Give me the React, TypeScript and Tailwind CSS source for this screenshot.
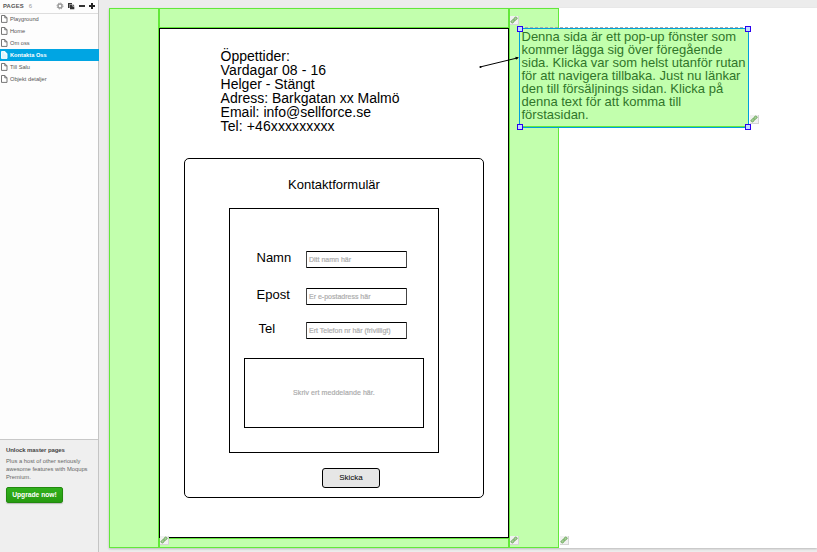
import type { ReactNode } from 'react';

const pages = ['Playground', 'Home', 'Om oss', 'Kontakta Oss', 'Till Salu', 'Objekt detaljer'];

const FileIcon = ({ active }: { active: boolean }) => (
  <svg className="h-[8px] w-[7px] shrink-0" viewBox="0 0 7 8" stroke={active ? '#fff' : '#666'} strokeWidth="0.9">
    <path d="M0.5 0.5H3.8L6 2.8V7.4H0.5Z" fill={active ? '#dff3fc' : '#fff'} />
    <path d="M3.8 0.5V2.8H6" fill="none" />
  </svg>
);

const Toolbar = () => (
  <div className="flex items-center">
    <svg className="h-[8px] w-[8px]" viewBox="0 0 8 8" fill="none" stroke="#999">
      <circle cx="4" cy="4" r="2" strokeWidth="1.4" />
      <circle cx="4" cy="4" r="3" strokeWidth="1" strokeDasharray="1.2 1.156" />
    </svg>
    <svg className="ml-[3px] h-[8px] w-[8px]" viewBox="0 0 8 8">
      <path d="M1 1H5V2H2.6V6H1Z" fill="#333" />
      <path d="M3 2.5H5.5V4.5H7.3V7.3H3Z" fill="#333" />
      <path d="M6 2.3L7.4 3.9H6Z" fill="#555" />
    </svg>
    <svg className="ml-[3px] h-[8px] w-[8px]" viewBox="0 0 8 8">
      <path d="M1 3H7V5H1Z" fill="#333" />
    </svg>
    <svg className="ml-[2px] h-[8px] w-[8px]" viewBox="0 0 8 8">
      <path d="M1 3H3V1H5V3H7V5H5V7H3V5H1Z" fill="#222" />
    </svg>
  </div>
);

const Sidebar = () => (
  <aside className="flex w-[99px] shrink-0 flex-col border-r border-[#c4c4c4] bg-[#efefef]">
    <div className="flex h-[440px] flex-col border-b border-[#c8c8c8] bg-[#fdfdfd]">
      <header className="flex h-[14px] shrink-0 items-center border-b border-[#ddd] pb-px pl-[3px] pr-[2px]">
        <span className="text-[5.9px] font-bold tracking-[0.1px] text-[#555]">PAGES</span>
        <span className="ml-[5px] flex-1 text-[6px] text-[#999]">6</span>
        <Toolbar />
      </header>
      <ul className="-mt-px">
        {pages.map((page) => {
          const active = page === 'Kontakta Oss';
          return (
            <li
              key={page}
              className={`flex h-[12px] items-center gap-[2px] pl-px text-[5.7px] leading-[12px] ${active ? '-mr-px bg-[#00a5e3] font-bold text-white' : 'text-[#555]'}`}
            >
              <FileIcon active={active} />
              {page}
            </li>
          );
        })}
      </ul>
    </div>
    <div className="flex flex-col items-start pl-[6px] pt-[6px]">
      <h2 className="text-[6px] font-bold leading-[8px] tracking-[-0.08px] text-[#444]">Unlock master pages</h2>
      <p className="mt-[3px] whitespace-nowrap text-[5.8px] leading-[8px] text-[#666]">
        Plus a host of other seriously
        <br />
        awesome features with Moqups
        <br />
        Premium.
      </p>
      <button className="mt-[6px] h-[16px] w-[57px] whitespace-nowrap rounded-[2px] border border-[#22890f] bg-linear-to-b from-[#30b01c] to-[#279b10] text-[6.7px] font-bold leading-[14px] text-white shadow-[0_1px_1px_#bbb]">
        Upgrade now!
      </button>
    </div>
  </aside>
);

const LinkBadge = ({ place }: { place: string }) => (
  <span className={`absolute flex h-[9px] w-[9px] items-center justify-center border-b border-r border-[#d5d5d5] bg-[#f1f1f1] ${place}`}>
    <svg className="h-[8px] w-[8px]" viewBox="0 0 8 8" fill="#a9d09b" stroke="#6aa85a" strokeWidth="0.9">
      <rect x="-1.8" y="-1.2" width="3.6" height="2.4" rx="1" transform="translate(5.4 2.7) rotate(-42)" />
      <rect x="-1.8" y="-1.2" width="3.6" height="2.4" rx="1" transform="translate(2.7 5.3) rotate(-42)" />
    </svg>
  </span>
);

const Hotspot = ({ place }: { place: string }) => (
  <div className={`absolute border border-[#63e83b] bg-[#c2ffad] ${place}`} />
);

const Handle = ({ place }: { place: string }) => (
  <span className={`absolute h-[6px] w-[6px] border border-[#2a00f0] bg-[#c0dcff] ${place}`} />
);

const Field = ({ label, hint, className }: { label: ReactNode; hint: string; className: string }) => (
  <div className={`flex h-[17px] items-start ${className}`}>
    <div className="w-[50px] pl-[0.5px] text-[13px] leading-[13px]">{label}</div>
    <div className="flex h-[17px] w-[101px] items-center whitespace-nowrap rounded-[1px] border border-x-[#444] border-y-black pl-[2px] text-[7px] leading-[8px] text-[#aaa] [-webkit-text-stroke:0.2px_#b0b0b0]">
      {hint}
    </div>
  </div>
);

const ContactForm = () => (
  <section className="absolute left-[184px] top-[158px] flex h-[340px] w-[300px] flex-col items-center rounded-[5px] border border-black">
    <h1 className="mt-[19px] text-[13px] leading-[14px]">Kontaktformulär</h1>
    <div className="mt-[16px] flex h-[245px] w-[210px] shrink-0 flex-col border border-black pt-[42px]">
      <Field className="ml-[26px]" label="Namn" hint="Ditt namn här" />
      <Field className="ml-[26px] mt-[20px]" label="Epost" hint="Er e-postadress här" />
      <Field className="ml-[26px] mt-[17px]" label={<span className="pl-[2px]">Tel</span>} hint="Ert Telefon nr här (frivilligt)" />
      <div className="ml-[14px] mt-[19px] flex h-[70px] w-[180px] items-center justify-center border border-black pt-px text-[7px] tracking-[0.08px] text-[#aaa] [-webkit-text-stroke:0.2px_#b0b0b0]">
        Skriv ert meddelande här.
      </div>
    </div>
    <button className="ml-[34px] mt-[15px] h-[20px] w-[58px] rounded-[3px] border border-black bg-[#e6e6e6] text-[8px] leading-[18px] text-black">
      Skicka
    </button>
  </section>
);

const PopupNote = () => (
  <div className="absolute left-[519px] top-[28px] h-[100px] w-[230px] border border-[#009fdc] bg-[#c2ffad]">
    <p className="ml-[1.5px] mt-px whitespace-nowrap text-[13px] leading-[13px] text-[#30752a]">
      Denna sida är ett pop-up fönster som
      <br />
      kommer lägga sig över föregående
      <br />
      sida. Klicka var som helst utanför rutan
      <br />
      för att navigera tillbaka. Just nu länkar
      <br />
      den till försäljnings sidan. Klicka på
      <br />
      denna text för att komma till
      <br />
      förstasidan.
    </p>
    <div className="absolute -top-[2px] left-0 w-full border-t border-dashed border-[#aaa]" />
    <div className="absolute bottom-0 left-0 h-px w-full bg-[#63e83b]" />
    <Handle place="-left-[3px] -top-[3px]" />
    <Handle place="-right-[3px] -top-[3px]" />
    <Handle place="-left-[3px] -bottom-[3px]" />
    <Handle place="-right-[3px] -bottom-[3px]" />
  </div>
);

export default function App() {
  return (
    <div className="relative flex h-[552px] w-[817px] overflow-hidden bg-[#ececec] font-['Liberation_Sans',Arial,sans-serif] text-black">
      <Sidebar />
      <main className="flex flex-1 pb-[4px] pl-[10px] pt-[8px]">
        <div className="flex-1 bg-white shadow-[0_1px_2px_#bbb]" />
      </main>

      <Hotspot place="left-[109px] top-[8px] h-[540px] w-[50px]" />
      <Hotspot place="left-[159px] top-[8px] h-[20px] w-[350px]" />
      <Hotspot place="left-[159px] top-[538px] h-[10px] w-[350px]" />
      <Hotspot place="left-[509px] top-[8px] h-[540px] w-[50px]" />
      <div className="absolute left-[159px] top-[28px] h-[510px] w-[350px] border border-black bg-white" />

      <div className="absolute left-[220.6px] top-[49px] whitespace-nowrap text-[14px] leading-[14px]">
        <p>Öppettider:</p>
        <p className="tracking-[0.1px]">Vardagar 08 - 16</p>
        <p>Helger - Stängt</p>
        <p>Adress: Barkgatan xx Malmö</p>
        <p>Email: info@sellforce.se</p>
        <p className="tracking-[0.1px]">Tel: +46xxxxxxxxx</p>
      </div>
      <ContactForm />
      <PopupNote />

      <svg className="absolute left-[478px] top-[54px] h-[16px] w-[42px]" viewBox="478 54 42 16">
        <path d="M480 67L518 57.8" stroke="#000" strokeWidth="1" />
        <circle cx="480.5" cy="67" r="1.1" />
        <path d="M519 57.5L515.3 56.8L516 59.8Z" />
      </svg>

      <LinkBadge place="left-[510px] top-[16px]" />
      <LinkBadge place="left-[750px] top-[115px]" />
      <LinkBadge place="left-[160px] top-[536px]" />
      <LinkBadge place="left-[510px] top-[536px]" />
      <LinkBadge place="left-[560px] top-[536px]" />
    </div>
  );
}
